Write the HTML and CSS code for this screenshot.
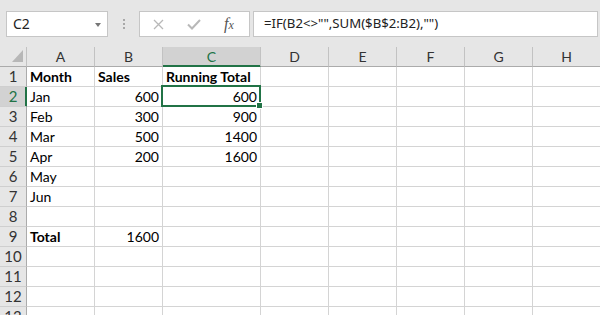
FILE: index.html
```html
<!DOCTYPE html>
<html>
<head>
<meta charset="utf-8">
<link rel="stylesheet" href="styles.css">
</head>
<body>
<div class="app">
  <div class="toolbar">
    <div class="namebox"><span class="ref">C2</span><span class="caret"></span></div>
    <div class="grip"><i></i><i></i><i></i></div>
    <div class="fxbox">
      <svg class="ico-x" width="11" height="11" viewBox="0 0 11 11"><path d="M1 1L10 10M10 1L1 10" stroke="#b8b8b8" stroke-width="1.3" fill="none"/></svg>
      <svg class="ico-ok" width="14" height="11" viewBox="0 0 14 11"><path d="M1 5.5L5 9.5L13 1" stroke="#b8b8b8" stroke-width="2" fill="none"/></svg>
      <span class="fx">f<span class="fx-x">x</span></span>
    </div>
    <div class="formula">=IF(B2&lt;&gt;"",SUM($B$2:B2),"")</div>
  </div>
  <div class="sheet">
    <div class="c corner"><span class="tri"></span></div>
    <div class="c h">A</div><div class="c h">B</div><div class="c h sel-col">C</div><div class="c h">D</div><div class="c h">E</div><div class="c h">F</div><div class="c h">G</div><div class="c h">H</div>

    <div class="c rh">1</div><div class="c b">Month</div><div class="c b">Sales</div><div class="c b">Running Total</div><div class="c"></div><div class="c"></div><div class="c"></div><div class="c"></div><div class="c"></div>
    <div class="c rh sel-row">2</div><div class="c">Jan</div><div class="c n">600</div><div class="c n active">600</div><div class="c"></div><div class="c"></div><div class="c"></div><div class="c"></div><div class="c"></div>
    <div class="c rh">3</div><div class="c">Feb</div><div class="c n">300</div><div class="c n">900</div><div class="c"></div><div class="c"></div><div class="c"></div><div class="c"></div><div class="c"></div>
    <div class="c rh">4</div><div class="c">Mar</div><div class="c n">500</div><div class="c n">1400</div><div class="c"></div><div class="c"></div><div class="c"></div><div class="c"></div><div class="c"></div>
    <div class="c rh">5</div><div class="c">Apr</div><div class="c n">200</div><div class="c n">1600</div><div class="c"></div><div class="c"></div><div class="c"></div><div class="c"></div><div class="c"></div>
    <div class="c rh">6</div><div class="c">May</div><div class="c"></div><div class="c"></div><div class="c"></div><div class="c"></div><div class="c"></div><div class="c"></div><div class="c"></div>
    <div class="c rh">7</div><div class="c">Jun</div><div class="c"></div><div class="c"></div><div class="c"></div><div class="c"></div><div class="c"></div><div class="c"></div><div class="c"></div>
    <div class="c rh">8</div><div class="c"></div><div class="c"></div><div class="c"></div><div class="c"></div><div class="c"></div><div class="c"></div><div class="c"></div><div class="c"></div>
    <div class="c rh">9</div><div class="c b">Total</div><div class="c n">1600</div><div class="c"></div><div class="c"></div><div class="c"></div><div class="c"></div><div class="c"></div><div class="c"></div>
    <div class="c rh">10</div><div class="c"></div><div class="c"></div><div class="c"></div><div class="c"></div><div class="c"></div><div class="c"></div><div class="c"></div><div class="c"></div>
    <div class="c rh">11</div><div class="c"></div><div class="c"></div><div class="c"></div><div class="c"></div><div class="c"></div><div class="c"></div><div class="c"></div><div class="c"></div>
    <div class="c rh">12</div><div class="c"></div><div class="c"></div><div class="c"></div><div class="c"></div><div class="c"></div><div class="c"></div><div class="c"></div><div class="c"></div>
    <div class="c rh">13</div><div class="c"></div><div class="c"></div><div class="c"></div><div class="c"></div><div class="c"></div><div class="c"></div><div class="c"></div><div class="c"></div>
  </div>
</div>
</body>
</html>
```
FILE: styles.css
```css
html, body {
  margin: 0;
  padding: 0;
}
body {
  width: 600px;
  height: 315px;
  overflow: hidden;
  background: #e6e6e6;
}
.app {
  width: 600px;
  height: 315px;
  overflow: hidden;
}
.toolbar {
  height: 47px;
  box-sizing: border-box;
  padding-top: 11px;
  display: flex;
  align-items: flex-start;
  background: #e6e6e6;
  font-family: "Noto Sans", sans-serif;
  font-size: 13.2px;
  color: #222;
}
.namebox {
  margin-left: 6px;
  width: 102px;
  height: 26px;
  box-sizing: border-box;
  border: 1px solid #c6c6c6;
  background: #fff;
  display: flex;
  align-items: center;
  justify-content: space-between;
  padding: 0 6px 0 6px;
  font-size: 14px;
}
.ref {
  line-height: 24px;
}
.caret {
  width: 0;
  height: 0;
  border-left: 3.5px solid transparent;
  border-right: 3.5px solid transparent;
  border-top: 4px solid #767676;
  margin-top: 1px;
}
.grip {
  margin-left: 15px;
  width: 2px;
  height: 26px;
  display: flex;
  flex-direction: column;
  justify-content: center;
  gap: 2px;
}
.grip i {
  display: block;
  width: 2px;
  height: 2px;
  background: #a8a8a8;
}
.fxbox {
  margin-left: 14px;
  width: 111px;
  height: 26px;
  box-sizing: border-box;
  border: 1px solid #c6c6c6;
  background: #fff;
  display: flex;
  align-items: center;
  padding-left: 13px;
}
.ico-x {
  display: block;
}
.ico-ok {
  display: block;
  margin-left: 23px;
}
.fx {
  margin-left: 23px;
  font-family: "Liberation Serif", serif;
  font-style: italic;
  font-size: 16px;
  color: #555;
  line-height: 16px;
}
.fx-x {
  font-size: 12px;
}
.formula {
  margin-left: 3px;
  margin-right: 2px;
  flex: 1;
  height: 26px;
  box-sizing: border-box;
  border: 1px solid #c6c6c6;
  background: #fff;
  padding-left: 10px;
  line-height: 23px;
  white-space: nowrap;
}
.sheet {
  display: grid;
  grid-template-columns: 27px 68px 68px 98px 68px 68px 68px 68px 68px;
  grid-auto-rows: 20px;
  background: #fff;
}
.c {
  box-sizing: border-box;
  border-right: 1px solid #d4d4d4;
  border-bottom: 1px solid #d4d4d4;
  padding: 0 3px;
  line-height: 19px;
  white-space: nowrap;
  overflow: hidden;
  font-family: Lato, "Liberation Sans", sans-serif;
  font-size: 14px;
  color: #000;
}
.n {
  text-align: right;
}
.b {
  font-weight: bold;
}
.h {
  background: #e6e6e6;
  border-right-color: #c2c2c2;
  border-bottom-color: #ababab;
  text-align: center;
  color: #333;
  padding: 0;
}
.corner {
  background: #e6e6e6;
  border-right-color: #c2c2c2;
  border-bottom-color: #ababab;
  position: relative;
}
.tri {
  position: absolute;
  left: 12px;
  top: 3px;
  width: 0;
  height: 0;
  border-left: 11px solid transparent;
  border-bottom: 12px solid #b7b7b7;
}
.rh {
  background: #e6e6e6;
  border-right-color: #ababab;
  border-bottom-color: #cfcfcf;
  text-align: center;
  color: #333;
  padding: 0;
  font-size: 15px;
}
.sel-col {
  background: #d2d2d2;
  color: #217346;
  border-bottom-color: #217346;
  box-shadow: inset 0 -1px 0 #217346;
}
.sel-row {
  background: #d2d2d2;
  color: #217346;
  border-right-color: #217346;
  box-shadow: inset -1px 0 0 #217346;
}
.active {
  position: relative;
  overflow: visible;
  z-index: 1;
}
.active::after {
  content: "";
  position: absolute;
  left: -2px;
  top: -2px;
  right: -1px;
  bottom: -1px;
  border: 2px solid #217346;
}
.active::before {
  content: "";
  position: absolute;
  right: -3px;
  bottom: -3px;
  width: 5px;
  height: 5px;
  background: #217346;
  border: 1px solid #fff;
  z-index: 2;
}
```
